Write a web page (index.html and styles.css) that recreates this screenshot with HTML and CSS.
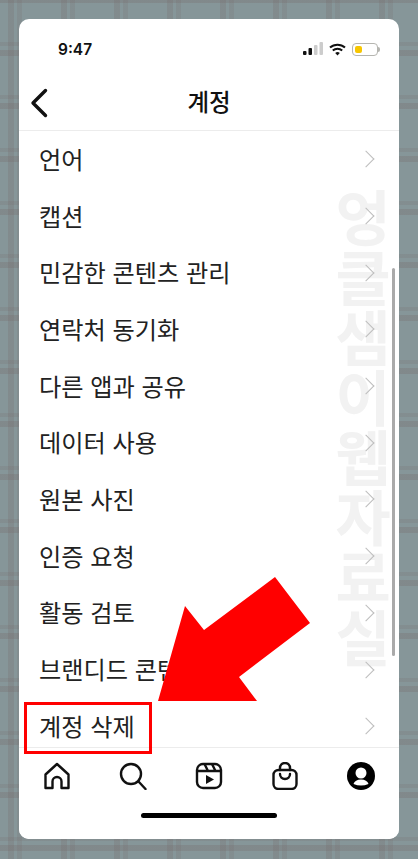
FILE: index.html
```html
<!doctype html>
<html lang="ko">
  <head>
    <meta charset="utf-8">
    <title>계정</title>
    <link rel="stylesheet" href="styles.css">
  </head>
  <body>
    <div class="phone">
      <div class="status-bar">
        <span class="time">9:47</span>
        <div class="status-icons">
          <svg width="20" height="14" viewBox="0 0 20 14">
            <rect x="0" y="9" width="3.5" height="4" rx="1" fill="#111"/>
            <rect x="5.5" y="6" width="3.5" height="7" rx="1" fill="#111"/>
            <rect x="11" y="3" width="3.5" height="10" rx="1" fill="#ccc"/>
            <rect x="16.5" y="0" width="3.5" height="13" rx="1" fill="#ccc"/>
          </svg>
          <svg width="17" height="13" viewBox="0 0 17 13" fill="none" stroke="#111" stroke-width="2">
            <path d="M1 4.6a11 11 0 0 1 15 0"/>
            <path d="M3.8 7.6a7 7 0 0 1 9.4 0"/>
            <path d="M8.5 12.4 6.2 10a3.3 3.3 0 0 1 4.6 0z" fill="#111" stroke="none"/>
          </svg>
          <div class="battery"><div class="battery-level"></div></div>
        </div>
      </div>

      <div class="nav-bar">
        <svg class="back" width="18" height="30" viewBox="0 0 18 30" fill="none" stroke="#111" stroke-width="3.4" stroke-linecap="round" stroke-linejoin="round">
          <path d="M15.500 2.500 3 15l12.500 12.500"/>
        </svg>
        <div class="nav-title">계정</div>
      </div>

      <div class="list">
        <div class="row">언어</div>
        <div class="row">캡션</div>
        <div class="row">민감한 콘텐츠 관리</div>
        <div class="row">연락처 동기화</div>
        <div class="row">다른 앱과 공유</div>
        <div class="row">데이터 사용</div>
        <div class="row">원본 사진</div>
        <div class="row">인증 요청</div>
        <div class="row">활동 검토</div>
        <div class="row">브랜디드 콘텐츠</div>
        <div class="row">계정 삭제</div>
      </div>

      <div class="tab-bar">
        <div class="tabs">
          <svg width="28" height="28" viewBox="0 0 28 28" fill="none" stroke="#111" stroke-width="2.400" stroke-linejoin="round">
            <path d="M2.500 26V12.500L14 2l11.500 10.500V26H18.500V19.500a4.500 4.500 0 0 0-9 0V26z"/>
          </svg>
          <svg width="28" height="28" viewBox="0 0 28 28" fill="none" stroke="#111" stroke-width="2.400" stroke-linecap="round">
            <circle cx="12" cy="12" r="10"/>
            <path d="M19.500 19.500 26.500 27"/>
          </svg>
          <svg width="28" height="28" viewBox="0 0 28 28" fill="none" stroke="#111" stroke-width="2.400" stroke-linejoin="round">
            <rect x="2" y="2" width="24" height="24" rx="6"/>
            <path d="M2 9h24M9.500 2l3.500 7M17 2l3.500 7"/>
            <path d="M11 13v9l8-4.500z" fill="#111" stroke="none"/>
          </svg>
          <svg width="28" height="28" viewBox="0 0 28 28" fill="none" stroke="#111" stroke-width="2.400" stroke-linecap="round">
            <rect x="2.500" y="8" width="23" height="19" rx="5"/>
            <path d="M9 8V6a5 5 0 0 1 10 0v2"/>
            <path d="M9 12a5 5 0 0 0 10 0"/>
          </svg>
          <svg width="28" height="28" viewBox="0 0 28 28">
            <circle cx="14" cy="14" r="14" fill="#000"/>
            <circle cx="14" cy="11" r="5.500" fill="#fff"/>
            <path d="M6.500 22q1.500-4.500 7.500-4.500t7.500 4.500q-7.500 3-15 0z" fill="#fff"/>
          </svg>
        </div>
        <div class="home-indicator"></div>
      </div>

      <div class="watermark">엉클샘이웹자료실</div>
      <div class="scrollbar"></div>

      <svg class="arrow" width="154" height="126" viewBox="0 0 154 126">
        <polygon points="117,2 152,48 81,102 99,126 0,126 27,31 46,55" fill="#f00"/>
      </svg>
      <div class="highlight"></div>
    </div>
  </body>
</html>
```

FILE: styles.css
```css
* {
  box-sizing: border-box;
  margin: 0;
  padding: 0;
}

html,
body {
  height: 100%;
  overflow: hidden;
}

body {
  font-family: 'Noto Sans CJK KR', 'Noto Sans', sans-serif;
  padding: 19px;
  background-color: #869699;
  background-image:
    repeating-linear-gradient(90deg, transparent 0 8px, rgba(118, 108, 108, 0.26) 8px 14px, transparent 14px 17px, rgba(118, 108, 108, 0.2) 17px 22px, transparent 22px 53px),
    repeating-linear-gradient(0deg, transparent 0 8px, rgba(118, 108, 108, 0.3) 8px 14px, transparent 14px 18px, rgba(118, 108, 108, 0.2) 18px 22px, transparent 22px 53px);
}

.phone {
  position: relative;
  display: flex;
  flex-direction: column;
  width: 380px;
  height: 820px;
  background: #fff;
  border-radius: 10px;
  overflow: hidden;
}

.status-bar {
  display: flex;
  align-items: center;
  justify-content: space-between;
  height: 58px;
  padding: 2px 21px 0 39px;
}

.time {
  font-family: Inter, sans-serif;
  font-size: 15.5px;
  font-weight: 600;
  color: #111;
}

.status-icons {
  display: flex;
  align-items: center;
  gap: 6px;
}

.battery {
  position: relative;
  width: 26px;
  height: 13px;
  padding: 2px;
  border: 1px solid #b5b5b0;
  border-radius: 4px;
}

.battery::after {
  content: '';
  position: absolute;
  top: 3px;
  right: -3px;
  width: 2px;
  height: 5px;
  background: #b5b5b0;
  border-radius: 0 2px 2px 0;
}

.battery-level {
  width: 7px;
  height: 100%;
  background: #f7c600;
  border-radius: 2px;
}

.nav-bar {
  position: relative;
  display: flex;
  align-items: center;
  justify-content: center;
  height: 54px;
  padding-bottom: 5px;
  border-bottom: 1px solid #ececec;
}

.back {
  position: absolute;
  left: 11px;
  top: 11px;
}

.nav-title {
  font-size: 23.5px;
  font-weight: 500;
  color: #111;
}

.list {
  position: relative;
  flex: 1;
  overflow: hidden;
  z-index: 1;
}

.row {
  position: relative;
  display: flex;
  align-items: center;
  height: 56.7px;
  padding-left: 20px;
  padding-bottom: 2px;
  font-size: 24.2px;
  color: #222;
}

.row::after {
  content: '';
  position: absolute;
  right: 27px;
  top: 50%;
  width: 11px;
  height: 11px;
  margin-top: -6px;
  border-top: 1.5px solid #bdbdbd;
  border-right: 1.5px solid #bdbdbd;
  transform: rotate(45deg);
}

.tab-bar {
  position: relative;
  display: flex;
  flex-direction: column;
  align-items: center;
  height: 92px;
  border-top: 1px solid #ececec;
  background: #fff;
  z-index: 1;
}

.tabs {
  display: flex;
  justify-content: space-around;
  width: 100%;
  padding-top: 14px;
}

.home-indicator {
  width: 136px;
  height: 5px;
  margin-top: 23px;
  background: #000;
  border-radius: 3px;
}

.watermark {
  position: absolute;
  left: 313px;
  top: 166px;
  width: 62px;
  font-size: 60px;
  font-weight: 700;
  line-height: 60px;
  text-align: center;
  color: #f2f2f2;
  word-break: break-all;
}

.scrollbar {
  position: absolute;
  left: 373px;
  top: 249px;
  width: 3px;
  height: 388px;
  background: #aaa;
  border-radius: 2px;
  z-index: 2;
}

.arrow {
  position: absolute;
  left: 139px;
  top: 556px;
  z-index: 3;
}

.highlight {
  position: absolute;
  left: 5px;
  top: 683px;
  width: 128px;
  height: 52px;
  border: 3px solid #f00;
  z-index: 3;
}
```
